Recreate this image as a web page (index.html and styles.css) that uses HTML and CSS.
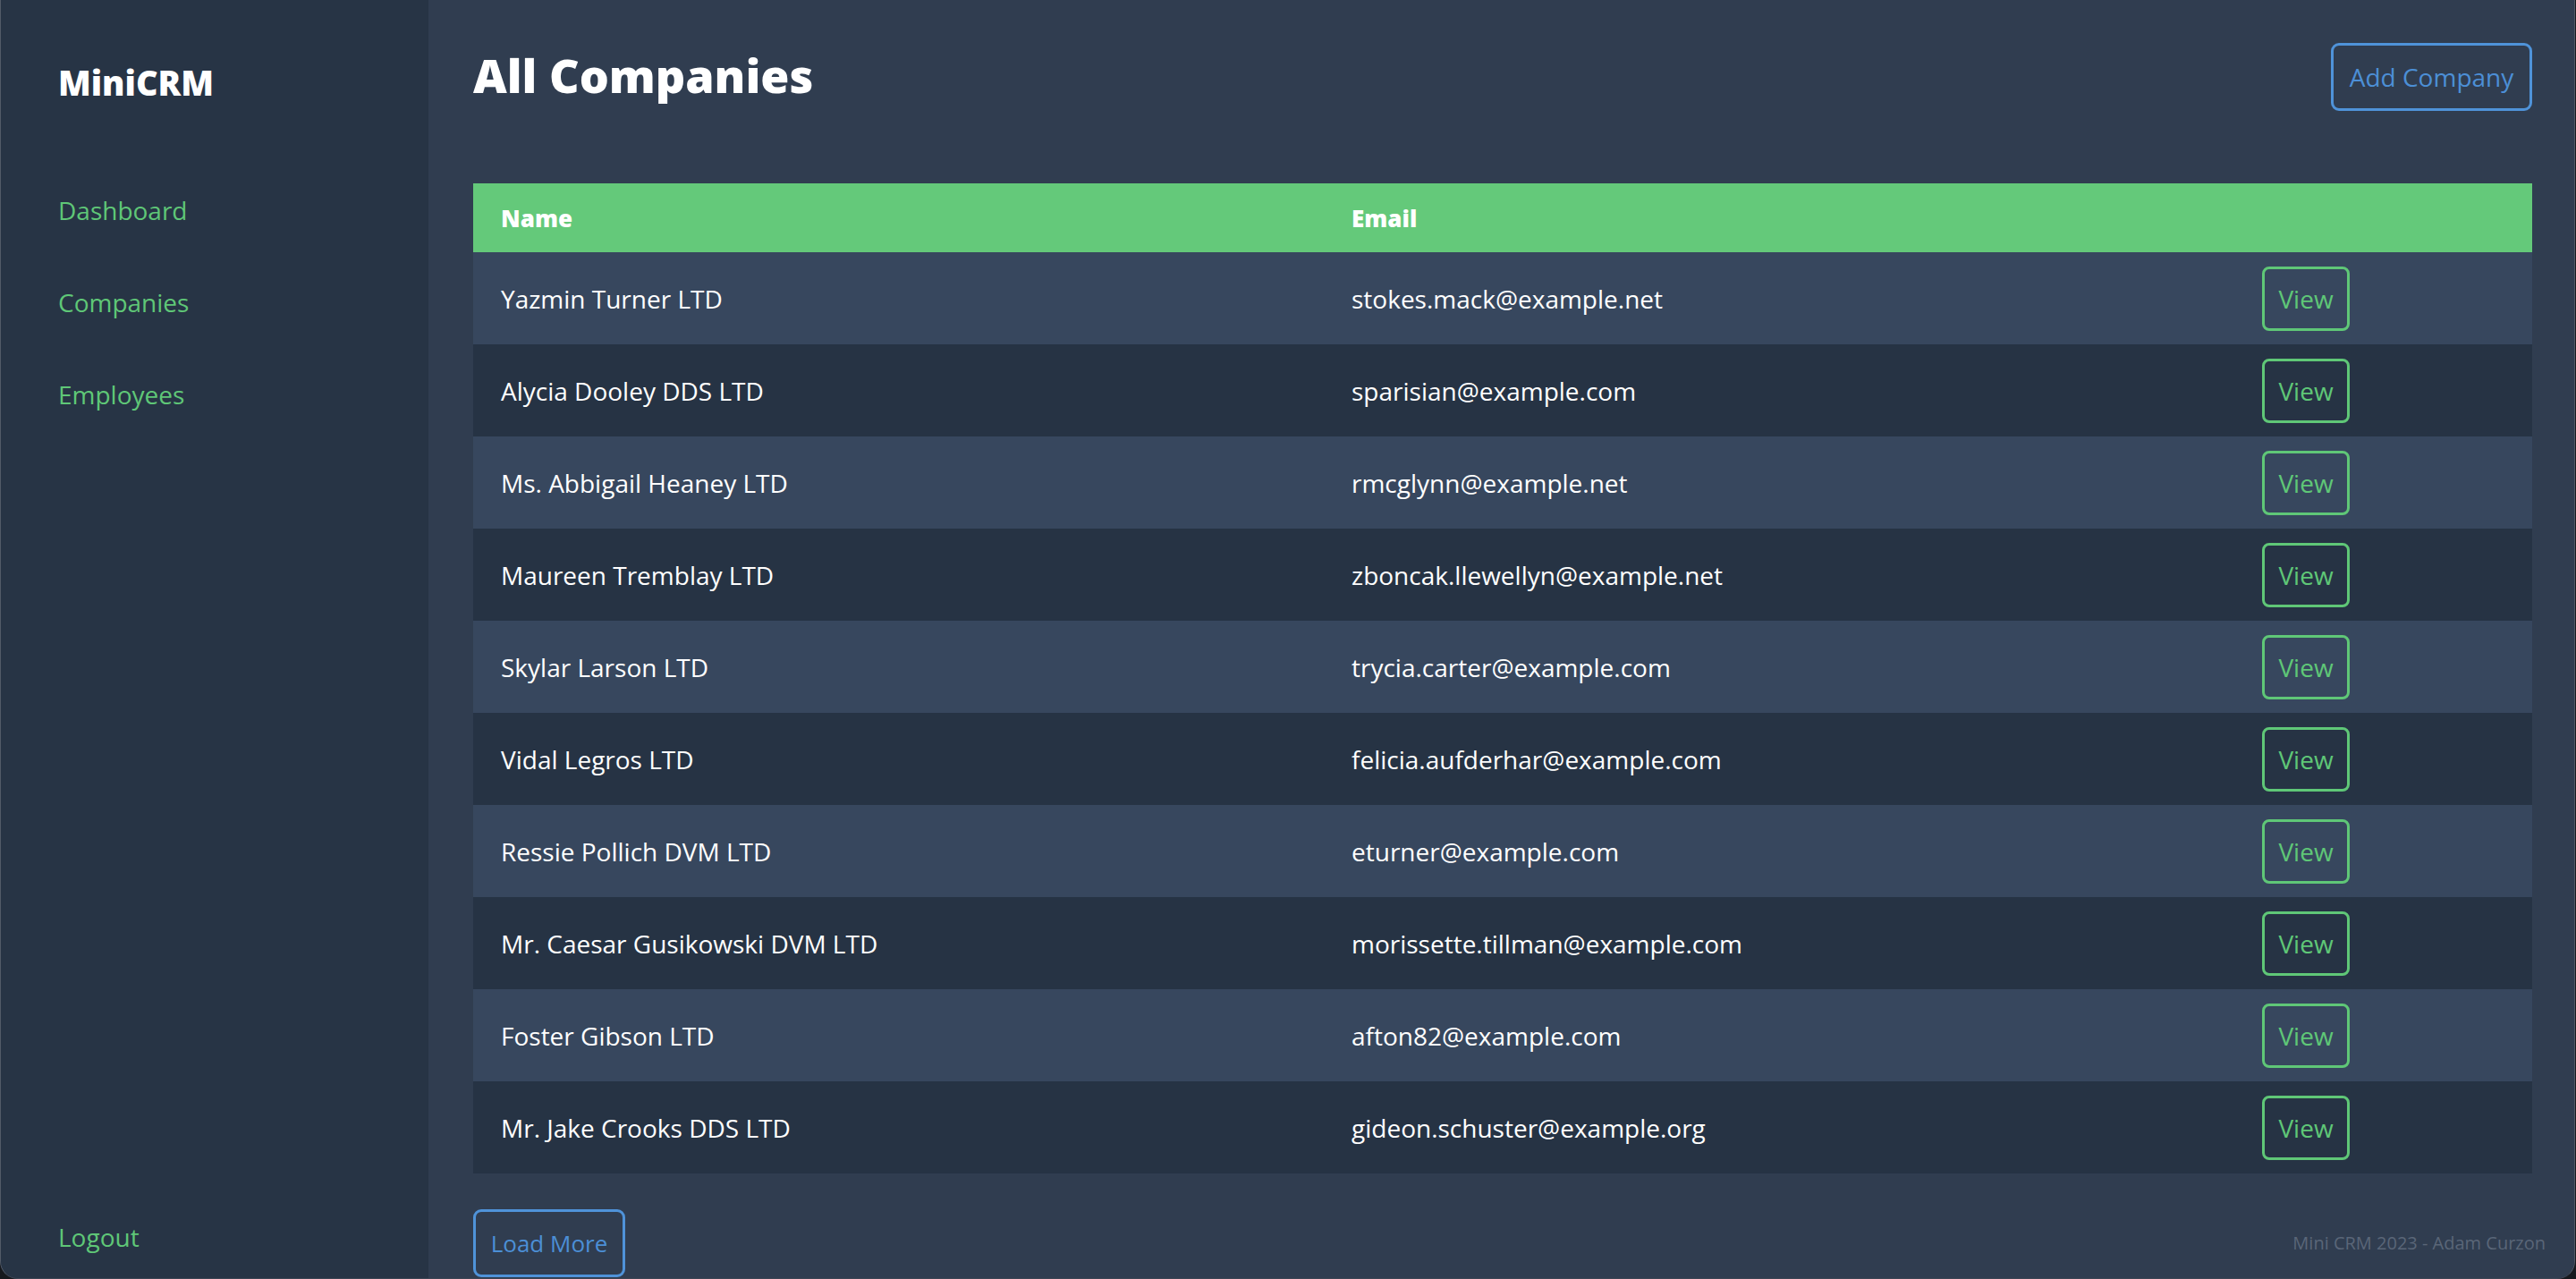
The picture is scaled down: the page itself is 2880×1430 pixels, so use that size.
FILE: index.html
```html
<!DOCTYPE html>
<html lang="en">
<head>
<meta charset="utf-8">
<title>MiniCRM - All Companies</title>
<link rel="stylesheet" href="styles.css">
</head>
<body>
<div class="window">
  <aside class="sidebar">
    <div class="logo">MiniCRM</div>
    <nav class="nav">
      <a class="nav-link" href="#">Dashboard</a>
      <a class="nav-link" href="#">Companies</a>
      <a class="nav-link" href="#">Employees</a>
    </nav>
    <a class="nav-link logout" href="#">Logout</a>
  </aside>
  <main class="main">
    <header class="page-head">
      <h1 class="title">All Companies</h1>
      <a class="btn btn-blue btn-add" href="#">Add Company</a>
    </header>
    <div class="table">
      <div class="row head"><div class="cell">Name</div><div class="cell">Email</div><div class="cell"></div></div>
      <div class="row odd"><div class="cell">Yazmin Turner LTD</div><div class="cell">stokes.mack@example.net</div><div class="cell"><a class="btn btn-green" href="#">View</a></div></div>
      <div class="row even"><div class="cell">Alycia Dooley DDS LTD</div><div class="cell">sparisian@example.com</div><div class="cell"><a class="btn btn-green" href="#">View</a></div></div>
      <div class="row odd"><div class="cell">Ms. Abbigail Heaney LTD</div><div class="cell">rmcglynn@example.net</div><div class="cell"><a class="btn btn-green" href="#">View</a></div></div>
      <div class="row even"><div class="cell">Maureen Tremblay LTD</div><div class="cell">zboncak.llewellyn@example.net</div><div class="cell"><a class="btn btn-green" href="#">View</a></div></div>
      <div class="row odd"><div class="cell">Skylar Larson LTD</div><div class="cell">trycia.carter@example.com</div><div class="cell"><a class="btn btn-green" href="#">View</a></div></div>
      <div class="row even"><div class="cell">Vidal Legros LTD</div><div class="cell">felicia.aufderhar@example.com</div><div class="cell"><a class="btn btn-green" href="#">View</a></div></div>
      <div class="row odd"><div class="cell">Ressie Pollich DVM LTD</div><div class="cell">eturner@example.com</div><div class="cell"><a class="btn btn-green" href="#">View</a></div></div>
      <div class="row even"><div class="cell">Mr. Caesar Gusikowski DVM LTD</div><div class="cell">morissette.tillman@example.com</div><div class="cell"><a class="btn btn-green" href="#">View</a></div></div>
      <div class="row odd"><div class="cell">Foster Gibson LTD</div><div class="cell">afton82@example.com</div><div class="cell"><a class="btn btn-green" href="#">View</a></div></div>
      <div class="row even"><div class="cell">Mr. Jake Crooks DDS LTD</div><div class="cell">gideon.schuster@example.org</div><div class="cell"><a class="btn btn-green" href="#">View</a></div></div>
    </div>
    <div class="bottom">
      <a class="btn btn-blue btn-more" href="#">Load More</a>
      <span class="credit">Mini CRM 2023 - Adam Curzon</span>
    </div>
  </main>
</div>
</body>
</html>
```

FILE: styles.css
```css
* { box-sizing: border-box; }

html, body {
  margin: 0;
  padding: 0;
  background: #16191e;
}

body {
  font-family: "Open Sans", "Noto Sans", sans-serif;
  width: 2880px;
  height: 1430px;
  overflow: hidden;
}

.window {
  width: 2879px;
  height: 1430px;
  display: flex;
  border-left: 1px solid #525a67;
  border-right: 1px solid #525a67;
  border-bottom: 1px solid #3d4553;
  border-radius: 0 0 20px 20px;
  overflow: hidden;
  background: #303d50;
}

/* Sidebar */
.sidebar {
  width: 478px;
  flex: none;
  background: #273445;
  display: flex;
  flex-direction: column;
  padding: 73px 0 32px 64px;
}

.logo {
  font-size: 38px;
  line-height: 38px;
  font-weight: 800;
  color: #ffffff;
}

.nav {
  display: flex;
  flex-direction: column;
  gap: 75px;
  margin-top: 110px;
}

.nav-link {
  font-size: 28px;
  line-height: 28px;
  color: #5fc777;
  text-decoration: none;
}

.logout {
  margin-top: auto;
}

/* Main */
.main {
  flex: 1;
  display: flex;
  flex-direction: column;
  padding: 48px 47px 0 50px;
  background: #303d50;
}

.page-head {
  display: flex;
  justify-content: space-between;
  align-items: flex-start;
}

.title {
  margin: 10px 0 0 0;
  font-size: 52px;
  line-height: 52px;
  font-weight: 800;
  color: #ffffff;
}

.btn {
  display: inline-flex;
  align-items: center;
  justify-content: center;
  border: 3px solid;
  border-radius: 9px;
  text-decoration: none;
  font-size: 28px;
  line-height: 28px;
}

.btn-blue {
  color: #4c8fd6;
  border-color: #4f93d9;
}

.btn-add {
  width: 225px;
  height: 76px;
}

.btn-green {
  color: #5fc777;
  border-color: #5fc777;
  width: 98px;
  height: 72px;
  border-radius: 8px;
}

/* Table */
.table {
  margin-top: 81px;
  display: flex;
  flex-direction: column;
}

.row {
  display: grid;
  grid-template-columns: 951px 1018px 1fr;
  height: 103px;
  align-items: center;
}

.cell {
  padding-left: 31px;
  font-size: 28px;
  line-height: 28px;
  color: #ffffff;
  white-space: nowrap;
}

.row.head {
  height: 77px;
  background: #64c97a;
}

.row.head .cell {
  font-size: 26px;
  font-weight: 800;
}

.row.odd { background: #37475e; }
.row.even { background: #263344; }

/* Bottom */
.bottom {
  margin-top: 40px;
  display: flex;
  justify-content: space-between;
  align-items: center;
}

.btn-more {
  width: 170px;
  height: 76px;
  font-size: 26px;
  line-height: 26px;
}

.credit {
  margin-right: -15px;
  font-size: 20px;
  line-height: 20px;
  color: #5a6678;
}
```
